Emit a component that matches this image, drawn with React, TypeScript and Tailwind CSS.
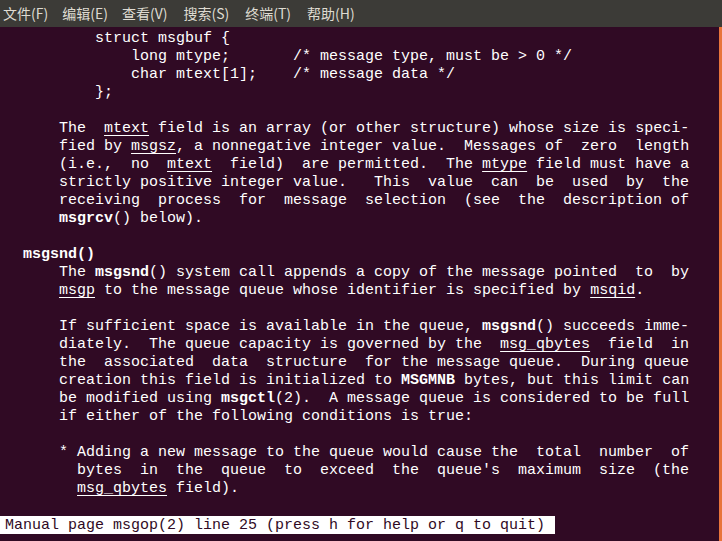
const menus = ["文件(F)", "编辑(E)", "查看(V)", "搜索(S)", "终端(T)", "帮助(H)"];

// ~word~ = underlined, ^word^ = bold
const lines = [
  "          struct msgbuf {",
  "              long mtype;       /* message type, must be > 0 */",
  "              char mtext[1];    /* message data */",
  "          };",
  "",
  "      The  ~mtext~ field is an array (or other structure) whose size is speci‐",
  "      fied by ~msgsz~, a nonnegative integer value.  Messages of  zero  length",
  "      (i.e.,  no  ~mtext~  field)  are permitted.  The ~mtype~ field must have a",
  "      strictly positive integer value.   This  value  can  be  used  by  the",
  "      receiving  process  for  message  selection  (see  the  description of",
  "      ^msgrcv^() below).",
  "",
  "  ^msgsnd()^",
  "      The ^msgsnd^() system call appends a copy of the message pointed  to  by",
  "      ~msgp~ to the message queue whose identifier is specified by ~msqid~.",
  "",
  "      If sufficient space is available in the queue, ^msgsnd^() succeeds imme‐",
  "      diately.  The queue capacity is governed by the  ~msg_qbytes~  field  in",
  "      the  associated  data  structure  for the message queue.  During queue",
  "      creation this field is initialized to ^MSGMNB^ bytes, but this limit can",
  "      be modified using ^msgctl^(2).  A message queue is considered to be full",
  "      if either of the following conditions is true:",
  "",
  "      * Adding a new message to the queue would cause the  total  number  of",
  "        bytes  in  the  queue  to  exceed  the  queue's  maximum  size  (the",
  "        ~msg_qbytes~ field).",
  "",
];

const Line = ({ text }: { text: string }) => {
  const parts = text.split(/(~[^~]+~|\^[^^]+\^)/);
  return (
    <div className="h-[18px] leading-[20px] whitespace-pre">
      {parts.map((p, i) => {
        if (p.startsWith("~")) {
          return (
            <span key={i} className="underline underline-offset-[3px]">
              {p.slice(1, -1)}
            </span>
          );
        }
        if (p.startsWith("^")) {
          return (
            <span key={i} className="font-bold">
              {p.slice(1, -1)}
            </span>
          );
        }
        return <span key={i}>{p}</span>;
      })}
      {text === "" ? " " : null}
    </div>
  );
};

export default function App() {
  return (
    <div className="w-[722px] h-[541px] flex flex-col overflow-hidden bg-[#300a24]">
      <div className="h-[27px] shrink-0 flex items-center gap-[14px] pl-[3px] bg-[#3c3b37] text-[#dfdbd2] text-[14px] font-['Noto_Sans_CJK_SC','Noto_Sans',sans-serif]">
        {menus.map((m, i) => (
          <span key={m} className={i >= 3 ? "ml-[2px]" : ""}>
            {m}
          </span>
        ))}
      </div>

      <div className="flex flex-1 min-h-0">
        <div className="flex-1 pt-[2px] text-[#ffffff] text-[15px] font-['Liberation_Mono','DejaVu_Sans_Mono',monospace]">
          <div className="pl-[5px]">
            {lines.map((l, i) => (
              <Line key={i} text={l} />
            ))}
          </div>
          <div className="h-[18px] whitespace-pre">
            <span className="inline-block h-[18px] leading-[20px] bg-white text-[#300a24] pl-[5px] w-[555px]">
              Manual page msgop(2) line 25 (press h for help or q to quit)
            </span>
          </div>
        </div>
        <div className="w-[3px] shrink-0 bg-[#e8743b]" />
      </div>
    </div>
  );
}
